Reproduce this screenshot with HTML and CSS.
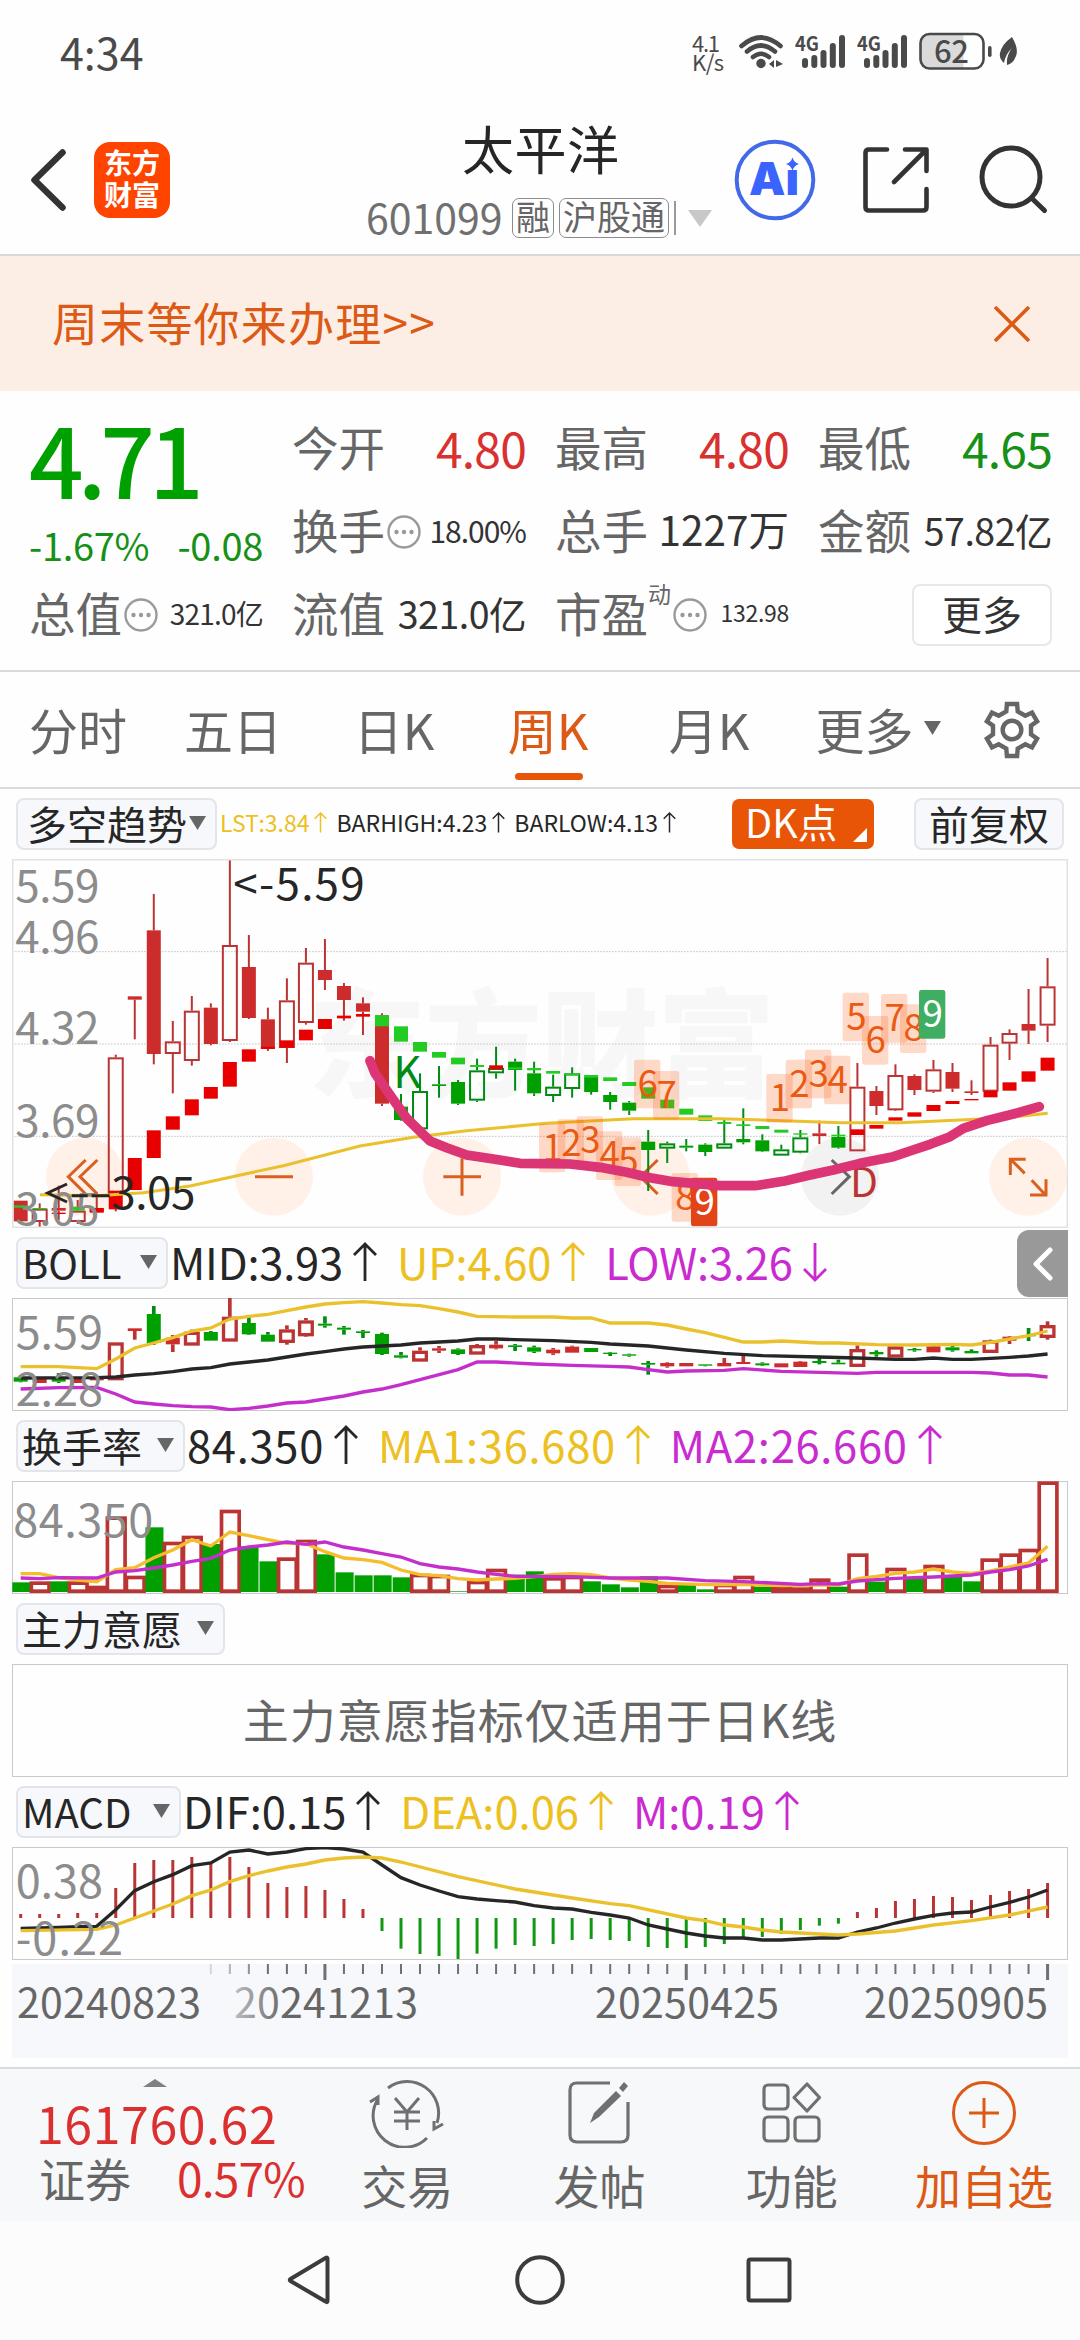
FILE: index.html
```html
<!DOCTYPE html>
<html lang="zh-CN">
<head>
<meta charset="utf-8">
<title>太平洋 601099</title>
<link rel="stylesheet" href="styles.css">
</head>
<body>
<svg class="defs" width="0" height="0">
  <defs>
    <symbol id="up" viewBox="0 0 24 40"><path d="M12 39V2M1 13L12 2l11 11" fill="none" stroke="currentColor" stroke-width="2.8"/></symbol>
    <symbol id="down" viewBox="0 0 24 40"><path d="M12 1v37M1 27l11 11 11-11" fill="none" stroke="currentColor" stroke-width="2.8"/></symbol>
    <symbol id="dots" viewBox="0 0 34 34"><circle cx="17" cy="17" r="15.5" fill="none" stroke="#9a9a9a" stroke-width="2.4"/><g fill="#999"><circle cx="9.5" cy="17" r="2.2"/><circle cx="17" cy="17" r="2.2"/><circle cx="24.5" cy="17" r="2.2"/></g></symbol>
    <symbol id="tri" viewBox="0 0 17 14"><path d="M0 0h17L8.500 14z" fill="currentColor"/></symbol>
  </defs>
</svg>

<div class="status">
  <span class="clock">4:34</span>
  <svg class="status-icons" width="340" height="50" viewBox="685 28 340 50" fill="#4a4a4a">
    <text x="692" y="52" font-size="22" textLength="28">4.1</text>
    <text x="692" y="71" font-size="22" textLength="32">K/s</text>
    <g fill="none" stroke="#4a4a4a" stroke-width="4.600" stroke-linecap="round"><path d="M741.500 46q19.500-17 39 0M747 51.500q14-12 28 0M753 57q8-6.500 16 0"/></g>
    <circle cx="761" cy="63.500" r="4.700"/>
    <path d="M769 64l5-4v8zM776 60v8M776 60l7 4-7 3z"/>
    <g id="sig">
      <text x="795" y="51" font-size="20" font-weight="700" textLength="24" lengthAdjust="spacingAndGlyphs">4G</text>
      <rect x="802" y="58" width="6" height="10" rx="3"/><rect x="811.300" y="55" width="6" height="13" rx="3"/><rect x="820.500" y="50" width="6" height="18" rx="3"/><rect x="829.800" y="43" width="6" height="25" rx="3"/><rect x="839" y="35" width="6" height="33" rx="3"/>
    </g>
    <use href="#sig" x="62"/>
    <path d="M929 35h34.500v33H929q-8 0-8-8V43q0-8 8-8z" fill="#dadada"/>
    <rect x="920.500" y="34" width="63" height="34.500" rx="9" fill="none" stroke="#4a4a4a" stroke-width="2.600"/>
    <text x="934" y="62.500" font-size="31" font-weight="500" textLength="35">62</text>
    <rect x="988" y="46" width="3.600" height="11" rx="1.800"/>
    <path d="M1012 37q7 12 4 19-3 8-9 9-1-9 5-17-7 7-8 15-5-4-4-10 2-9 12-16z"/>
  </svg>
</div>

<header class="header">
  <svg class="back" width="36" height="64" viewBox="30 148 36 64"><path d="M62.500 152.500L34.500 180l28 27.500" fill="none" stroke="#333" stroke-width="6.500" stroke-linecap="round" stroke-linejoin="round"/></svg>
  <div class="logo"><span>东方</span><span>财富</span></div>
  <div class="title">
    <h1>太平洋</h1>
    <div class="code-row">
      <span class="code">601099</span><span class="tag">融</span><span class="tag">沪股通</span><i class="cut"></i>
      <svg class="drop" width="24" height="17" viewBox="0 0 24 17"><path d="M0 0h24L12 17z" fill="#c8c8c8"/></svg>
    </div>
  </div>
  <svg class="header-icons" width="320" height="90" viewBox="730 135 320 90" fill="none" stroke="#333" stroke-width="5">
    <circle cx="775" cy="180" r="38.300" stroke="#4169ea" stroke-width="4"/>
    <g fill="#3b64ff" stroke="none"><text class="ai" x="749" y="195" font-size="45" textLength="50" lengthAdjust="spacingAndGlyphs">Aı</text><path d="M792.500 157.500q1.500 5 6.500 6.500-5 1.500-6.500 7-1.500-5.500-6.500-7 5-1.500 6.500-6.500z"/></g>
    <g stroke-width="4.600" stroke-linecap="round" stroke-linejoin="round"><path d="M887 149.500H869q-3.500 0-3.500 3.500V207q0 3.500 3.500 3.500h54q3.500 0 3.500-3.500V189M905 149.500h21.500V171M926 150l-32 32"/></g>
    <circle cx="1011" cy="177" r="29"/><path d="M1032 198.500l12.500 12" stroke-linecap="round"/>
  </svg>
</header>

<div class="banner">
  <span>周末等你来办理&gt;&gt;</span>
  <svg width="38" height="38" viewBox="0 0 38 38"><path d="M2 2l34 34M36 2L2 36" stroke="#dd5a16" stroke-width="3.600"/></svg>
</div>

<section class="quote">
  <div class="price-box"><strong>4.71</strong><div class="change"><span>-1.67%</span><span>-0.08</span></div></div>
  <div class="cell"><label>今开</label><b class="big red">4.80</b></div>
  <div class="cell"><label>最高</label><b class="big red">4.80</b></div>
  <div class="cell"><label>最低</label><b class="big green">4.65</b></div>
  <div class="cell"><label>换手</label><svg class="dots"><use href="#dots"/></svg><b class="v30">18.00%</b></div>
  <div class="cell"><label>总手</label><b class="v40">1227万</b></div>
  <div class="cell"><label>金额</label><b class="v37">57.82亿</b></div>
  <div class="cell"><label>总值</label><svg class="dots"><use href="#dots"/></svg><b class="v28">321.0亿</b></div>
  <div class="cell"><label>流值</label><b class="v37">321.0亿</b></div>
  <div class="cell"><label>市盈</label><sup>动</sup><svg class="dots"><use href="#dots"/></svg><b class="v24">132.98</b></div>
  <div class="cell end"><button>更多</button></div>
</section>

<nav class="tabs">
  <span>分时</span><span>五日</span><span>日K</span><span class="on">周K</span><span>月K</span>
  <span>更多<svg class="tri"><use href="#tri"/></svg></span>
  <span class="gear"><svg width="60" height="60" viewBox="-30 -30 60 60" fill="none" stroke="#666" stroke-width="4.400"><path id="gear"/><circle r="9.300"/></svg></span>
</nav>

<section class="ind first">
  <div class="chip c1">多空趋势<svg class="tri"><use href="#tri"/></svg></div>
  <div class="legend small"><span class="y">LST:3.84<svg class="arr"><use href="#up"/></svg></span><span>BARHIGH:4.23<svg class="arr"><use href="#up"/></svg></span><span>BARLOW:4.13<svg class="arr"><use href="#up"/></svg></span></div>
  <div class="dk">DK点</div>
  <div class="chip fq">前复权</div>
</section>
<svg class="chart main" id="main" viewBox="36 207 3168 1107"></svg>

<section class="ind">
  <div class="chip c2">BOLL<svg class="tri"><use href="#tri"/></svg></div>
  <div class="legend boll"><span>MID:3.93<svg class="arr"><use href="#up"/></svg></span><span class="y">UP:4.60<svg class="arr"><use href="#up"/></svg></span><span class="m">LOW:3.26<svg class="arr"><use href="#down"/></svg></span></div>
  <div class="handle"><svg width="20" height="34" viewBox="0 0 20 34"><path d="M17 3L3 17l14 14" fill="none" stroke="#fff" stroke-width="5" stroke-linecap="round" stroke-linejoin="round"/></svg></div>
</section>
<svg class="chart sub" id="boll" viewBox="36 207 3168 339"></svg>

<section class="ind">
  <div class="chip c3">换手率<svg class="tri"><use href="#tri"/></svg></div>
  <div class="legend turn"><span>84.350<svg class="arr"><use href="#up"/></svg></span><span class="y">MA1:36.680<svg class="arr"><use href="#up"/></svg></span><span class="m">MA2:26.660<svg class="arr"><use href="#up"/></svg></span></div>
</section>
<svg class="chart sub" id="turn" viewBox="36 756 3168 339"></svg>

<section class="ind">
  <div class="chip c4">主力意愿<svg class="tri"><use href="#tri"/></svg></div>
</section>
<div class="chart sub note">主力意愿指标仅适用于日K线</div>

<section class="ind">
  <div class="chip c5">MACD<svg class="tri"><use href="#tri"/></svg></div>
  <div class="legend macd"><span>DIF:0.15<svg class="arr"><use href="#up"/></svg></span><span class="y">DEA:0.06<svg class="arr"><use href="#up"/></svg></span><span class="m">M:0.19<svg class="arr"><use href="#up"/></svg></span></div>
</section>
<svg class="chart sub" id="macd" viewBox="36 744 3168 339"></svg>

<svg class="axis" id="axis" width="1056" height="94" viewBox="12 0 1056 94"></svg>

<footer class="bar">
  <div class="index">
    <svg width="24" height="8" viewBox="0 0 24 8"><path d="M0 8L12 0l12 8z" fill="#808080"/></svg>
    <b class="idx">161760.62</b>
    <div class="idx-row"><span>证券</span><b>0.57%</b></div>
  </div>
  <div class="act"><svg width="76" height="70" viewBox="-38 -35 76 70" fill="none" stroke="#707070" stroke-width="3"><path d="M-19-25A31.500 31.500 0 0 1 30 10M20 25A31.500 31.500 0 0 1-29-14M-37-11l8-5v8M36 11l-9 5v-8M-12-15L0-1l12-14M0-1V17M-13-1h26M-13 8h26"/></svg><span>交易</span></div>
  <div class="act"><svg width="76" height="70" viewBox="-38 -35 76 70" fill="none" stroke="#707070" stroke-width="3.200"><path d="M11-30h-33q-7 0-7 7v45q0 7 7 7h44q7 0 7-7V-11"/><path d="M-9 10l4-10L17-22l5 5L0 4zM20-25l5-6 4 4-5 6z" fill="#707070" stroke="none"/></svg><span>发帖</span></div>
  <div class="act"><svg width="76" height="70" viewBox="-38 -35 76 70" fill="none" stroke="#707070" stroke-width="3.200"><rect x="-28" y="-28" width="24" height="24" rx="4"/><rect x="-28" y="4" width="24" height="24" rx="4"/><rect x="3" y="4" width="24" height="24" rx="4"/><path d="M15-29l12.500 13.500L15-2 2-15.500z" stroke-linejoin="round"/></svg><span>功能</span></div>
  <div class="act add"><svg width="76" height="70" viewBox="-38 -35 76 70" fill="none" stroke="#dd5a16" stroke-width="3"><circle r="30.500"/><path d="M0-15v30M-15 0h30"/></svg><span>加自选</span></div>
</footer>

<div class="sysnav">
  <svg width="600" height="60" viewBox="240 2250 600 60" fill="none" stroke="#3c3c3c" stroke-width="4"><path d="M327.500 2259.500v42.500q0 2-2 .5l-35-20.500q-1.500-1 0-2l35-21q2-1 2 .5z"/><circle cx="540" cy="2281" r="22.800"/><rect x="748.500" y="2260.500" width="41" height="41" rx="2"/></svg>
</div>
<script src="charts.js"></script>
</body>
</html>
```
FILE: styles.css
```css
* { box-sizing: border-box; margin: 0; padding: 0; }
body {
  width: 1080px; height: 2340px; overflow: hidden; background: #fefefe; color: #262626;
  font-family: "Noto Sans CJK SC", "Noto Sans", sans-serif; line-height: 1;
  display: flex; flex-direction: column;
}
body > * { flex: none; }
b { font-weight: 400; }
svg { display: block; flex: none; }
.defs { position: absolute; }

.status { height: 106px; display: flex; justify-content: space-between; padding: 28px 55px 28px 60px; }
.clock { font-size: 43px; line-height: 47px; color: #4a4a4a; }

.header { height: 150px; border-bottom: 2px solid #d6d8da; display: flex; padding: 0 30px; }
.back { margin-top: 42px; }
.logo { width: 76px; height: 76px; margin: 36px 0 0 28px; border-radius: 16px; background: #ff4400; color: #fff;
  display: flex; flex-direction: column; align-items: center; justify-content: center; font-size: 28px; font-weight: 700; line-height: 32px; padding-bottom: 4px; }
.title { width: 350px; margin-left: 196px; display: flex; flex-direction: column; }
.title h1 { font-size: 52px; font-weight: 400; line-height: 60px; margin: 12px 0 0 96px; white-space: nowrap; letter-spacing: 0.500px; }
.code-row { display: flex; align-items: center; height: 40px; margin-top: 20px; }
.code { font-size: 41px; color: #707070; width: 146px; padding-bottom: 4px; }
.tag { border: 1.500px solid #8c8c8c; border-radius: 7px; height: 40px; line-height: 34px; font-size: 34px; padding: 0 3px; color: #666; margin-right: 5px; white-space: nowrap; }
.cut { width: 2px; height: 34px; background: #999; margin-right: 12px; }
.header-icons { margin: 29px -30px 0 14px; }

.banner { height: 135px; background: #fceee5; display: flex; align-items: center; justify-content: space-between; padding: 0 49px 0 52px; color: #dd5a16; font-size: 46px; letter-spacing: 1.200px; }
.banner span { padding-bottom: 5px; }

.quote { height: 281px; border-bottom: 2px solid #dadada; padding: 16px 28px 0 29px; display: grid; grid-template-columns: repeat(4, 234px); column-gap: 29px; grid-template-rows: repeat(3, 83px); }
.price-box { grid-row: span 2; color: #00a000; }
.price-box strong { display: block; font-size: 96px; line-height: 96px; font-weight: 500; letter-spacing: -6px; margin-top: 3px; }
.change { display: flex; justify-content: space-between; color: #169016; font-size: 38px; line-height: 40px; letter-spacing: -0.300px; margin-top: 19px; }
.cell { display: flex; align-items: center; color: #666; white-space: nowrap; }
.cell label, .cell b { padding-bottom: 4px; }
.cell label { font-size: 46.500px; }
.cell b { margin-left: auto; color: #333; }
.cell .big { font-size: 48px; letter-spacing: -0.800px; }
.cell .red { color: #d93030; }
.cell .green { color: #169016; }
.v40 { font-size: 40.500px; } .v37 { font-size: 37.500px; letter-spacing: -0.500px; } .v30 { font-size: 30px; letter-spacing: -1px; } .v28 { font-size: 28px; letter-spacing: -0.800px; } .v24 { font-size: 23px; letter-spacing: -0.300px; }
.dots { width: 34px; height: 34px; margin-left: 2px; }
.cell sup { font-size: 23px; margin: -42px 0 0 0; }
.cell.end { justify-content: flex-end; }
.cell button { width: 140px; height: 62px; border: 2px solid #e8e8e8; border-radius: 8px; background: #fff; font: 40px "Noto Sans CJK SC", sans-serif; line-height: 54px; padding-bottom: 3px; color: #333; }

.tabs { height: 117px; border-bottom: 2px solid #dadada; display: grid; grid-template-columns: 156px 154px 168px 140px 182px 156px 112px; color: #666; font-size: 49px; }
.tabs span { display: flex; align-items: center; justify-content: center; position: relative; white-space: nowrap; padding-bottom: 3px; }
.tabs .gear { padding: 0; }
.tabs .on { color: #dd5a16; }
.tabs .on::after { content: ""; position: absolute; left: 37px; bottom: 7px; width: 68px; height: 7px; border-radius: 4px; background: #e85507; }
.tri { width: 17px; height: 14px; color: #666; }
.tabs .tri { margin-left: 10px; }

.ind { height: 70px; display: flex; align-items: center; padding-left: 16px; position: relative; }
.chip { height: 52px; border: 2px solid #e4e5ea; border-radius: 8px; background: #f7f8fb; display: flex; align-items: center; justify-content: space-between; font-size: 40px; line-height: 44px; padding: 0 9px 3px 4px; white-space: nowrap; }
.c1 { width: 201px; padding-left: 9px; }
.c2 { width: 152px; } .c3 { width: 169px; } .c4 { width: 209px; } .c5 { width: 165px; }
.legend { display: flex; font-size: 43.500px; white-space: nowrap; margin-left: 2px; padding-bottom: 3px; }
.legend span { display: flex; align-items: center; margin-right: 20px; }
.legend .arr { width: 24px; height: 40px; margin-left: 10px; }
.legend.boll { letter-spacing: -0.200px; }
.legend.turn { letter-spacing: 0.700px; }
.legend.macd { letter-spacing: 0; }
.legend.small { font-size: 23px; letter-spacing: 0; margin-left: 3px; }
.legend.small span { margin-right: 9px; }
.legend.small .arr { width: 13px; height: 21px; margin-left: 5px; }
.y { color: #edc022; } .m { color: #c92bd0; }
.dk { position: relative; width: 142px; height: 50px; border-radius: 7px; background: #e85507; color: #fff; font-size: 39.500px; line-height: 44px; padding-left: 13px; margin-left: auto; }
.dk::after { content: ""; position: absolute; right: 7px; bottom: 7px; border-left: 14px solid transparent; border-bottom: 14px solid #fff; }
.fq { width: 150px; margin: 0 16px 0 40px; padding: 0 0 3px; justify-content: center; }
.handle { position: absolute; right: 12px; top: 2px; width: 51px; height: 67px; border-radius: 12px 0 0 12px; background: #999; display: flex; align-items: center; justify-content: center; }

.chart { width: 1056px; margin-left: 12px; }
.main { height: 369px; }
.sub { height: 113px; }
.note { border: 1px solid #c9c9c9; display: flex; align-items: center; justify-content: center; color: #666; font-size: 46px; letter-spacing: 1px; padding-bottom: 6px; }
.axis { margin: 4px 0 0 12px; background: #f7f8fb; }
svg text { font-family: "Noto Sans CJK SC", "Noto Sans", sans-serif; }
svg .ai { font-family: Inter, "Noto Sans", sans-serif; font-weight: 900; }

.bar { height: 154px; margin-top: 9px; border-top: 2px solid #d8dadc; background: #f7f8fa; display: grid; grid-template-columns: 311px repeat(4, 192.250px); }
.index svg { margin: 10px 0 0 143px; }
.idx { display: block; font-size: 50px; line-height: 50px; letter-spacing: 0.600px; color: #dc2f2f; margin: 10px 0 0 36px; }
.idx-row { display: flex; margin: 7px 0 0 39px; font-size: 46px; color: #666; }
.idx-row b { color: #dc2f2f; margin-left: 46px; letter-spacing: -0.800px; }
.act { display: flex; flex-direction: column; align-items: center; color: #666; font-size: 46px; }
.act svg { margin: 9px 0 13px; }
.add { color: #dd5a16; }
.sysnav { height: 118px; background: #fcfcfc; display: flex; justify-content: center; padding-top: 28px; }
```
FILE: charts.js
```js
const RED = '#bb3434', FILL = '#cc2c2c', GREEN = '#008c14', GFILL = '#00a000';
const YEL = '#eac12c', MAG = '#c42fcc', INK = '#262626';
const X = i => 62 + 57.05 * i;
const put = (id, s) => { document.getElementById(id).innerHTML = s; };
const rect = (x, y, w, h, a) => `<rect x="${x}" y="${y}" width="${w}" height="${h}" ${a}/>`;
const text = (s, x, y, size, len, fill, extra = '') =>
  `<text x="${x}" y="${y}" font-size="${size}" fill="${fill}" ${len ? `textLength="${len}"` : ''} ${extra}>${s}</text>`;
const poly = (pts, c, w, extra = '') =>
  `<polyline points="${pts.map(p => p.join()).join(' ')}" fill="none" stroke="${c}" stroke-width="${w}" ${extra}/>`;
const parse = s => s.trim().split(/\s+/).map(p => p.split(/[:,]/).map(Number));
const line = (s, c) => poly(parse(s).map(([i, v]) => [X(i), v]), c, 10);

// each candle: kind, body top, body bottom, wick top, wick bottom
function candles(data, sw, wick) {
  return data.trim().split('\n').map((row, i) => {
    const [k, a, b, c, d] = row.trim().split(' ');
    const [t, bt, wt, wb] = [a, b, c, d].map(Number);
    const col = /r|R/.test(k) ? RED : GREEN;
    const w = rect(X(i) - wick / 2, wt, wick, Math.max(0, t - wt), `fill="${col}"`) +
      rect(X(i) - wick / 2, bt, wick, Math.max(0, wb - bt), `fill="${col}"`);
    return w + (/[RG]/.test(k)
      ? rect(X(i) - 21, t, 42, bt - t, `fill="${k === 'R' ? FILL : GFILL}"`)
      : rect(X(i) - 24 + sw / 2, t + sw / 2, 48 - sw, Math.max(1, bt - t - sw), `fill="none" stroke="${col}" stroke-width="${sw}"`));
  }).join('');
}

const week = `R 1232 1294 1232 1300
r 1256 1296 1240 1316
R 1254 1262 1187 1290
r 1262 1296 1230 1302
R 1254 1266 1220 1266
r 802 1215 794 1264
R 619 629 619 748
R 421 792 312 823
r 754 792 693 910
r 662 813 618 827
R 653 762 640 766
r 465 753 207 756
R 531 684 435 687
R 688 777 653 783
r 631 774 565 819
r 518 699 474 704
R 540 570 447 600
R 588 630 579 692
R 640 665 622 735
R 676 941 670 948
G 950 990 912 992
g 903 1018 850 1018
G 883 888 828 923
G 876 941 870 945
g 841 932 806 936
g 834 850 770 866
G 815 840 806 902
G 850 910 815 918
g 890 918 854 936
g 850 897 832 923
G 860 906 855 914
G 915 936 906 959
G 938 962 933 975
G 1055 1080 1020 1203
g 1060 1076 1055 1119
G 1067 1073 1047 1084
G 1064 1086 1060 1098
g 1060 1076 990 1076
G 1047 1057 955 1063
G 1051 1084 1033 1086
g 1078 1097 1064 1097
g 1042 1088 1020 1090
R 1030 1038 992 1062
G 1041 1073 1008 1076
r 890 1084 819 1084
R 903 948 888 975
r 855 961 823 963
R 858 900 853 915
r 838 905 810 909
R 846 896 819 906
R 904 909 871 915
r 764 905 741 905
r 729 761 718 810
R 702 722 597 762
r 589 707 504 756`;

// trend blocks: index, top, bottom
const hot = '2,1268,1272 4,1254,1268 5,1202,1258 6,1104,1200 7,1021,1104 8,979,1019 9,928,976 10,891,926 11,816,890 12,778,815 13,770,777 14,751,773 15,719,751 16,687,717 17,677,685 18,672,680 25,826,838 44,1018,1035 45,1005,1016 46,982,992 47,967,980 48,945,963 49,933,942 50,927,931 51,903,922 52,877,902 53,844,875 54,803,842';
const cool = '0,1246,1253 1,1254,1258 3,1250,1262 19,676,709 20,709,755 21,756,785 22,786,803 23,803,823 24,825,831 26,832,838 27,834,841 28,843,851 29,852,857 30,855,863 31,862,873 32,876,888 33,892,926 34,929,955 35,956,974 36,976,993 37,996,1002 38,1003,1008 39,1008,1017 40,1019,1028 41,1030,1034 43,1034,1039';
const block = (s, c) => parse(s).map(([i, a, b]) => rect(X(i) - 21, a, 42, b - a, `fill="${c}"`)).join('');

const grid = [485, 762, 1039].map(y => `<path d="M36 ${y}H3204" stroke="#c8c8c8" stroke-width="3" stroke-dasharray="5 4"/>`).join('');
const circles = [[255], [822], [1386], [1953], [2520, '#f2f2f2'], [3084]].map(([x, c]) => `<circle cx="${x}" cy="1160" r="117" fill="${c || '#fff0e8'}"/>`).join('');
const S = 'fill="none" stroke="#d9601e" stroke-width="9"';
const icons = `<path d="M257 1110l-52 50 52 52M292 1110l-52 50 52 52" ${S}/><path d="M765 1160h114M1330 1160h113M1386 1105v112M1973 1110l-52 50 52 52" ${S}/>
<path d="M2495 1110l53 50-53 52" fill="none" stroke="#666" stroke-width="9"/>
<path d="M3031 1155v-47h46M3033 1109l41 41M3138 1168v47h-48M3136 1214l-41-43" ${S}/>`;

const marks = [[1617, 1001, 1], [1673, 988, 2], [1730, 979, 3], [1788, 1024, 4], [1844, 1042, 5], [1902, 809, 6], [1959, 843, 7], [2015, 1149, 8], [2073, 1163, 9, '#e04418'],
  [2299, 852, 1], [2357, 809, 2], [2415, 779, 3], [2472, 797, 4], [2528, 608, 5], [2586, 678, 6], [2643, 612, 7], [2700, 643, 8], [2757, 600, 9, '#40ae62']]
  .map(([x, y, n, c]) => rect(x, y, 79, 146, `rx="7" fill="${c || 'rgba(255,85,10,.22)'}"`) + text(n, x + 41, y + 111, 110, 0, c ? '#fff' : '#ea5a12', 'text-anchor="middle"')).join('');

put('main', text('东方财富', 925, 895, 352, 1400, '#f7f7f7', 'font-weight="900"') + grid +
  circles + icons + candles(week, 6, 6) + block(hot, '#e80000') + block(cool, '#22cc22') +
  poly(parse('120,1214 290,1217 430,1208 570,1188 850,1127 1080,1068 1240,1042 1400,1022 1640,1000 1900,986 2160,986 2350,992 2520,998 2700,998 2880,990 3020,983 3143,970'), YEL, 9) +
  [['5.59', 335], ['4.96', 488], ['4.32', 761], ['3.69', 1040], ['3.05', 1305]].map(([s, y]) => text(s, 46, y, 132, 252, '#8c8c8c')).join('') +
  text('&lt;-5.59', 700, 330, 132, 394, INK) + text('3.05', 334, 1256, 132, 252, INK) +
  `<path d="M201 1182l-58 27 58 27M215 1217h48M275 1217h54" fill="none" stroke="${INK}" stroke-width="9"/>` +
  text('K', 1180, 895, 130, 0, '#008c14') + text('D', 2550, 1222, 122, 0, RED) + marks +
  poly(parse('1110,812 1125,850 1170,915 1220,985 1290,1053 1340,1073 1400,1095 1480,1107 1560,1120 1710,1122 1800,1132 1880,1147 1950,1163 2020,1175 2160,1187 2265,1187 2350,1174 2430,1155 2500,1140 2580,1120 2680,1100 2730,1083 2790,1063 2850,1040 2890,1015 2960,992 3040,972 3118,950'), '#dc3575', 29, 'stroke-linecap="round" stroke-linejoin="round"') +
  '<rect x="38" y="209" width="3164" height="1103" fill="none" stroke="#e2e2e2" stroke-width="5"/>');

const frame = y => `<rect x="37.500" y="${y + 1.5}" width="3165" height="336" fill="none" stroke="#c9c9c9" stroke-width="3"/>`;

const boll = `G 445 458 440 460
R 447 462 447 462
G 448 458 432 462
R 447 462 447 462
R 446 454 446 454
r 340 454 340 454
R 298 306 298 332
G 255 342 231 348
R 326 346 318 369
r 308 350 302 350
G 309 335 306 335
r 263 338 207 338
G 282 316 258 318
G 317 338 309 338
r 301 342 289 347
r 274 322 267 324
G 284 290 262 296
G 296 302 291 317
G 307 312 303 327
G 315 375 311 378
G 379 386 369 388
r 365 398 355 398
R 358 365 351 372
G 361 375 358 378
r 348 377 345 377
R 347 358 336 361
G 349 354 345 366
G 355 368 350 372
R 362 373 357 378
R 353 371 350 371
G 357 369 357 369
G 371 375 369 381
G 376 380 374 383
G 402 407 396 437
R 402 412 400 416
R 402 412 402 412
G 406 410 406 412
R 402 412 387 412
R 399 405 380 405
G 403 409 400 411
R 403 415 403 415
R 398 414 396 414
G 396 402 387 406
G 401 406 392 406
r 360 414 349 414
G 369 376 364 383
r 352 386 349 386
G 360 364 357 368
R 352 370 346 370
G 355 364 349 368
G 366 373 361 373
r 334 372 332 372
R 323 335 321 345
G 318 322 297 336
r 288 327 277 332`;
put('boll', frame(207) + candles(boll, 10, 11) +
  line('0:413 2:413 4:419 5:390 6:357 7:342 8:326 9:306 10:297 11:270 12:262 13:256 14:245 15:234 16:225 17:221 18:218 19:222 20:227 21:230 22:239 23:249 24:262 26:264 28:264 29:267 30:267 31:282 33:282 34:288 35:300 36:311 37:325 38:339 39:339 40:336 42:342 43:342 45:347 47:348 49:346 50:348 51:340 52:330 53:320 54:306', YEL) +
  line('0:447 4:446 5:444 6:438 7:434 8:428 9:420 10:416 11:405 12:399 13:393 14:384 15:375 16:368 17:360 18:354 19:351 20:348 21:342 22:339 23:336 24:330 25:330 26:332 28:335 30:340 31:345 33:351 35:363 37:373 39:380 42:384 44:387 46:391 47:391 48:387 49:391 50:391 52:385 53:381 54:375', INK) +
  line('0:480 2:476 4:475 5:495 6:519 7:525 8:530 9:533 10:534 11:542 12:538 13:531 14:522 15:519 16:510 17:501 18:489 19:480 20:467 21:452 22:437 23:422 24:399 25:399 27:405 29:409 31:412 32:414 33:422 34:429 35:426 37:424 38:419 40:427 42:430 44:433 45:430 50:430 51:432 52:438 53:438 54:444', MAG) +
  text('5.59', 47, 359, 135, 262, '#8c8c8c') + text('2.28', 47, 530, 135, 262, '#8c8c8c'));

const turnover = 'G1060 r1057 G1057 r1057 r1070 r862 r1040 G895 r938 r920 G945 r842 G952 G997 r985 r932 G976 G1030 G1039 G1039 G1045 r1034 r1037 G1087 r1055 r1019 G1037 G1027 r1044 r1040 G1057 G1066 G1075 G1042 r1067 G1066 G1081 r1064 r1040 G1073 r1073 r1075 r1048 G1073 r973 G1058 r1016 G1048 r1007 G1044 G1057 r988 r973 r959 r757';
put('turn', frame(756) + turnover.split(' ').map((s, i) => {
  const t = +s.slice(1);
  return s[0] === 'G' ? rect(X(i) - 25, t, 54, 1089 - t, `fill="${GFILL}"`)
    : rect(X(i) - 25, t + 5.5, 53, Math.max(2, 1081 - t), `fill="none" stroke="${RED}" stroke-width="11"`);
}).join('') +
  line('0:1034 1:1034 2:1046 3:1053 4:1058 5:1022 6:1016 7:986 8:963 9:932 10:951 11:909 12:920 13:932 14:943 15:944 16:968 17:987 18:992 19:1000 20:1023 21:1037 22:1040 23:1049 24:1053 25:1050 26:1048 27:1043 28:1036 29:1034 30:1037 31:1047 32:1053 33:1057 34:1063 36:1067 38:1066 40:1070 42:1068 43:1068 44:1049 45:1042 46:1033 47:1029 48:1020 49:1029 50:1033 51:1026 52:1014 53:1002 54:952', '#f5bc2c') +
  line('0:1047 1:1049 2:1046 4:1047 5:1029 6:1025 7:1017 8:1008 9:997 10:988 11:963 12:954 13:948 14:939 15:946 16:939 17:954 18:963 19:974 20:984 21:1004 22:1014 23:1020 24:1029 25:1036 26:1042 27:1042 29:1043 31:1047 34:1047 36:1055 38:1058 41:1066 42:1064 43:1065 44:1056 46:1048 48:1044 50:1038 51:1029 52:1022 53:1011 54:991', MAG) +
  text('84.350', 40, 923, 135, 420, '#8c8c8c'));

const hist = [945, 945, 945, 942, 942, 867, 792, 783, 783, 774, 795, 774, 804, 852, 864, 861, 873, 900, 930, 996, 1049, 1065, 1071, 1080, 1064, 1049, 1038, 1041, 1035, 1023, 1020, 1023, 1026, 1044, 1047, 1047, 1044, 1035, 1020, 1014, 1005, 993, 980, 974, 939, 927, 906, 900, 891, 894, 903, 888, 876, 870, 852];
put('macd', frame(744) + hist.map((v, i) => rect(X(i) - 4.5, Math.min(v, 957), 9, Math.abs(v - 957), `fill="${v < 957 ? RED : '#109810'}"`)).join('') +
  line('0:988 2:985 3:983 4:982 5:932 6:875 7:848 8:827 9:800 10:792 11:759 12:753 13:765 14:759 15:749 16:746 17:750 18:759 19:798 20:836 21:858 22:876 23:893 24:900 25:905 26:909 27:920 28:927 29:930 30:940 31:948 32:957 33:978 34:990 35:1002 36:1011 37:1017 38:1017 39:1023 40:1023 41:1020 42:1017 43:1017 44:999 45:987 46:972 47:960 48:949 49:942 50:939 51:924 52:910 53:894 54:873', INK) +
  line('0:995 4:991 5:978 6:957 7:936 8:915 9:890 10:873 11:848 12:830 13:816 14:804 15:795 16:783 17:777 18:774 19:777 20:789 23:833 26:870 29:897 31:914 32:920 35:957 36:965 37:978 38:984 39:993 40:999 42:1005 43:1008 44:1005 46:996 48:978 50:965 52:948 54:924', YEL) +
  text('0.38', 47, 896, 135, 262, '#8c8c8c') + text('-0.22', 47, 1068, 135, 322, '#8c8c8c'));

let ticks = '<defs><linearGradient id="fade" gradientUnits="userSpaceOnUse" x1="225" x2="285"><stop offset="0" stop-color="#ccc"/><stop offset="1" stop-color="#666"/></linearGradient></defs>';
for (let i = 10; i < 55; i++) {
  const major = (i - 16) % 19 === 0;
  ticks += rect(X(i) / 3 - (major ? 1.5 : 1), 0, major ? 3 : 2, major ? 16 : 10, `fill="#707070" opacity="${Math.min(1, (i - 9) / 4)}"`);
}
put('axis', ticks + text('20240823', 17, 54, 41, 184, '#666') + text('20241213', 234, 54, 41, 184, 'url(#fade)') +
  text('20250425', 595, 54, 41, 184, '#666') + text('20250905', 864, 54, 41, 184, '#666'));

// settings gear: six teeth, four corner points for each
const gear = [];
for (let k = 0; k < 6; k++) {
  [[-11, 26.5], [11, 26.5], [17, 19.5], [43, 19.5]].forEach(([a, r]) => {
    const t = (k * 60 + a - 90) * Math.PI / 180;
    gear.push((r * Math.cos(t)).toFixed(1) + ' ' + (r * Math.sin(t)).toFixed(1));
  });
}
document.getElementById('gear').setAttribute('d', 'M' + gear.join('L') + 'Z');
```
